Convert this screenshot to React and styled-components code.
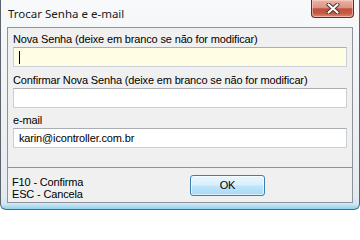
import React from "react";
import styled, { createGlobalStyle } from "styled-components";

const Global = createGlobalStyle`
  html, body { margin: 0; padding: 0; background: #ffffff; }
  body { width: 360px; height: 210px; overflow: hidden; }
  * { box-sizing: border-box; }
`;

const Window = styled.div`
  width: 360px;
  height: 210px;
  display: flex;
  flex-direction: column;
  padding: 0 6px 6px 6px;
  border-left: 1px solid #5b636c;
  border-right: 1px solid #5b636c;
  border-bottom: 1px solid #3f6f8c;
  border-radius: 0 0 6px 6px;
  background: linear-gradient(
    to bottom,
    #f8f9fb 0px,
    #eef0f3 120px,
    #e6eaef 196px,
    #cfe6f3 204px,
    #8fd0f0 209px
  );
  font-family: "Liberation Sans", Arial, sans-serif;
  color: #000;
`;

const TitleBar = styled.div`
  height: 27px;
  flex: 0 0 27px;
  display: flex;
  justify-content: space-between;
  align-items: flex-start;
`;

const Title = styled.div`
  padding: 7px 0 0 1px;
  font-family: "Noto Sans", "Liberation Sans", sans-serif;
  font-size: 11.5px;
  line-height: 14px;
  color: #1a1a1a;
`;

const CloseButton = styled.div`
  width: 43px;
  height: 18px;
  margin-right: -1px;
  border: 1px solid #6a2a22;
  border-top: none;
  border-radius: 0 0 4px 4px;
  background: linear-gradient(
    to bottom,
    #eab4a9 0%,
    #dc9484 45%,
    #c0503e 52%,
    #c55a47 78%,
    #dc8a76 100%
  );
  box-shadow: inset 0 0 0 1px rgba(255, 220, 210, 0.55);
  display: flex;
  align-items: center;
  justify-content: center;
`;

const Client = styled.div`
  flex: 1;
  display: flex;
  flex-direction: column;
  border: 1px solid #8e949b;
  background: #f0f0f0;
  font-size: 11px;
  letter-spacing: -0.15px;
`;

const Form = styled.div`
  flex: 0 0 140px;
  height: 140px;
  border-bottom: 1px solid #8e949b;
  padding: 5px 5px 0 5px;
  display: flex;
  flex-direction: column;
`;

const Field = styled.div`
  display: flex;
  flex-direction: column;
  margin-top: ${(p) => p.$top || 0}px;
`;

const Label = styled.div`
  line-height: 13px;
  height: 13px;
  margin-bottom: 1px;
  white-space: nowrap;
`;

const Input = styled.div`
  height: 20px;
  width: 100%;
  border: 1px solid #c9d0d8;
  border-top-color: #abadb3;
  background: ${(p) => (p.$active ? "#fffde3" : "#ffffff")};
  padding: 0 5px;
  display: flex;
  align-items: center;
  line-height: 13px;
  white-space: nowrap;
`;

const Caret = styled.span`
  display: inline-block;
  width: 1px;
  height: 13px;
  background: #000;
`;

const Footer = styled.div`
  flex: 1;
  display: flex;
  align-items: flex-start;
  padding: 7px 0 0 4px;
`;

const Hints = styled.div`
  flex: 0 0 178px;
  margin-top: 1px;
  line-height: 12px;
`;

const OkButton = styled.div`
  width: 75px;
  height: 21px;
  border: 1px solid #3c7fb1;
  border-radius: 3px;
  background: linear-gradient(
    to bottom,
    #eaf6fd 0%,
    #d9f0fc 48%,
    #bee6fd 52%,
    #a7d9f5 100%
  );
  box-shadow: inset 0 0 0 1px rgba(255, 255, 255, 0.6);
  display: flex;
  align-items: center;
  justify-content: center;
  line-height: 13px;
`;

export default function App() {
  return (
    <>
      <Global />
      <Window>
        <TitleBar>
          <Title>Trocar Senha e e-mail</Title>
          <CloseButton>
            <svg width="16" height="11" viewBox="0 0 16 11">
              <path
                d="M3.5 1.5 L12.5 9.5 M12.5 1.5 L3.5 9.5"
                stroke="#4a2a26"
                strokeWidth="4"
                strokeLinecap="round"
                fill="none"
              />
              <path
                d="M3.5 1.5 L12.5 9.5 M12.5 1.5 L3.5 9.5"
                stroke="#ffffff"
                strokeWidth="2.2"
                strokeLinecap="round"
                fill="none"
              />
            </svg>
          </CloseButton>
        </TitleBar>
        <Client>
          <Form>
            <Field>
              <Label>Nova Senha (deixe em branco se não for modificar)</Label>
              <Input $active>
                <Caret />
              </Input>
            </Field>
            <Field $top={7}>
              <Label>Confirmar Nova Senha (deixe em branco se não for modificar)</Label>
              <Input />
            </Field>
            <Field $top={6}>
              <Label>e-mail</Label>
              <Input>karin@icontroller.com.br</Input>
            </Field>
          </Form>
          <Footer>
            <Hints>
              <div>F10 - Confirma</div>
              <div>ESC - Cancela</div>
            </Hints>
            <OkButton>OK</OkButton>
          </Footer>
        </Client>
      </Window>
    </>
  );
}
